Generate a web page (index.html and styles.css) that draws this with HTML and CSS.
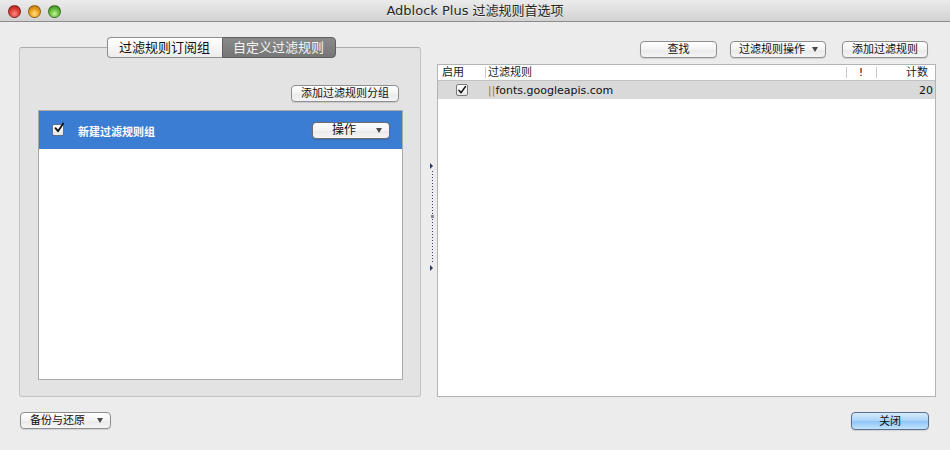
FILE: index.html
```html
<!DOCTYPE html>
<html lang="zh-CN">
<head>
<meta charset="utf-8">
<title>Adblock Plus 过滤规则首选项</title>
<link rel="stylesheet" href="styles.css">
</head>
<body>
<div class="window">
  <div class="titlebar">
    <div class="lights">
      <span class="light red"></span>
      <span class="light yellow"></span>
      <span class="light green"></span>
    </div>
    <div class="title">Adblock Plus 过滤规则首选项</div>
  </div>

  <div class="main">
    <div class="left">
      <div class="tabbox">
        <div class="tabs">
          <div class="tab">过滤规则订阅组</div>
          <div class="tab active">自定义过滤规则</div>
        </div>
        <div class="group-actions">
          <button class="btn add-group">添加过滤规则分组</button>
        </div>
        <div class="group-list">
          <div class="group-row">
            <span class="check on"><svg viewBox="0 0 12 12" width="12" height="12"><path d="M2.5 6.2 L5 9.2 L10.2 1.5" fill="none" stroke="#111" stroke-width="1.8" stroke-linecap="round" stroke-linejoin="round"/></svg></span>
            <span class="group-name">新建过滤规则组</span>
            <button class="btn popup ops">操作<span class="arrow"></span></button>
          </div>
        </div>
      </div>
    </div>

    <div class="splitter">
      <svg width="16" height="375" viewBox="0 0 16 375">
        <polygon points="9,141 12,144 9,147" fill="#2c3570"/>
        <line x1="11.5" y1="149" x2="11.5" y2="241" stroke="#3b3f73" stroke-width="1" stroke-dasharray="1 2"/>
        <rect x="10" y="193" width="3" height="3" fill="#8a8a9a"/>
        <polygon points="9,243 12,246 9,249" fill="#2c3570"/>
      </svg>
    </div>

    <div class="right">
      <div class="toolbar">
        <button class="btn find">查找</button>
        <button class="btn popup rule-ops">过滤规则操作<span class="arrow"></span></button>
        <button class="btn add-rule">添加过滤规则</button>
      </div>
      <div class="table">
        <div class="thead">
          <div class="c-en">启用</div>
          <div class="c-rule">过滤规则</div>
          <div class="c-ex">!</div>
          <div class="c-cnt">计数</div>
        </div>
        <div class="trow">
          <div class="c-en"><span class="check small"><svg viewBox="0 0 12 12" width="10" height="10"><path d="M2.2 6.3 L4.8 9.3 L10.2 1.8" fill="none" stroke="#111" stroke-width="1.6" stroke-linecap="round" stroke-linejoin="round"/></svg></span></div>
          <div class="c-rule"><span class="sep">||</span>fonts.googleapis.com</div>
          <div class="c-ex"></div>
          <div class="c-cnt">20</div>
        </div>
      </div>
    </div>
  </div>

  <div class="bottom">
    <button class="btn popup backup">备份与还原<span class="arrow"></span></button>
    <button class="btn default close">关闭</button>
  </div>
</div>
</body>
</html>
```

FILE: styles.css
```css
* { box-sizing: border-box; }
html, body { margin: 0; padding: 0; }
body {
  width: 950px;
  height: 450px;
  background: #ececec;
  font-family: "DejaVu Sans", "Noto Sans CJK SC", sans-serif;
  color: #111;
  overflow: hidden;
}
.window { width: 950px; height: 450px; display: flex; flex-direction: column; }

.titlebar {
  height: 22px;
  flex: none;
  display: flex;
  align-items: center;
  position: relative;
  background: linear-gradient(#ebebeb, #d2d2d2);
  border-bottom: 1px solid #8c8c8c;
}
.lights { display: flex; gap: 7px; padding-left: 8px; padding-top: 1px; }
.light {
  width: 13px; height: 13px; border-radius: 50%;
  border: 1px solid rgba(0,0,0,.35);
}
.red { background: radial-gradient(circle at 50% 70%, #ff8a80 0%, #e0443a 45%, #a21b15 100%); }
.yellow { background: radial-gradient(circle at 50% 70%, #ffe08a 0%, #f0a420 45%, #b06a0a 100%); }
.green { background: radial-gradient(circle at 50% 70%, #c6f29a 0%, #6cc040 45%, #2f7d1a 100%); }
.title {
  position: absolute; left: 0; right: 0; top: 0; height: 21px;
  line-height: 21px; text-align: center;
  font-size: 13px; color: #262626;
  text-shadow: 0 1px 0 rgba(255,255,255,.6);
}

.main { display: flex; height: 375px; flex: none; padding-left: 19px; }
.left { width: 402px; flex: none; padding-top: 25px; }
.tabbox {
  height: 350px;
  background: #e3e3e3;
  border: 1px solid #c3c3c3;
  border-top-color: #acacac;
  border-radius: 3px;
  display: flex;
  flex-direction: column;
}
.tabs {
  display: flex;
  justify-content: center;
  margin-top: -11px;
  margin-left: 2px;
  height: 21px;
  flex: none;
}
.tab {
  height: 21px;
  line-height: 19px;
  font-size: 13px;
  padding: 0 10px;
  border: 1px solid #8e8e8e;
  background: linear-gradient(#ffffff, #ececec);
  color: #111;
  width: 115px;
  text-align: center;
}
.tab:first-child { border-radius: 4px 0 0 4px; border-right: none; }
.tab.active {
  width: 114px;
  border-radius: 0 4px 4px 0;
  background: linear-gradient(#8a8a8a, #767676);
  border-color: #5e5e5e;
  color: #f4f4f4;
}
.group-actions { display: flex; justify-content: flex-end; padding: 27px 21px 0 0; flex: none; }
.group-list {
  margin: 8px 17px 16px 18px;
  flex: 1;
  background: #fff;
  border: 1px solid #a9a9a9;
}
.group-row {
  height: 38px;
  background: #3b7dd2;
  display: flex;
  align-items: center;
  padding-left: 13px;
  padding-right: 12px;
}
.group-name { color: #fff; font-weight: bold; font-size: 11px; margin-left: 14px; flex: 1; padding-top: 1px; }

.check {
  width: 12px; height: 12px;
  background: linear-gradient(#fff, #e6e6e6);
  border: 1px solid #5f6f86;
  border-radius: 2px;
  display: inline-flex; align-items: center; justify-content: center;
  position: relative;
}
.check svg { position: absolute; left: 0; top: -3px; }
.check.small { width: 12px; height: 12px; border-color: #7a7a7a; }
.check.small svg { left: 0; top: 0; }

.btn {
  font-family: inherit;
  font-size: 11px;
  height: 17px;
  padding: 0 8px;
  line-height: 15px;
  border: 1px solid #8f8f8f;
  border-radius: 4px;
  background: linear-gradient(#ffffff, #f3f3f3 50%, #e9e9e9 51%, #f5f5f5);
  box-shadow: 0 1px 1px rgba(0,0,0,.12);
  color: #111;
  display: inline-flex;
  align-items: center;
  justify-content: center;
  margin: 0;
}
.add-group { width: 108px; }
.popup { justify-content: flex-start; position: relative; }
.arrow {
  width: 0; height: 0;
  border-left: 3.5px solid transparent;
  border-right: 3.5px solid transparent;
  border-top: 5px solid #4a4a4a;
  position: absolute; right: 7px; top: 5px;
}
.ops { width: 78px; font-size: 12px; padding-left: 19px; border-color: #6d6d6d; }

.splitter { width: 16px; flex: none; }
.splitter svg { display: block; }

.right { width: 499px; flex: none; display: flex; flex-direction: column; }
.toolbar { height: 42px; display: flex; align-items: flex-start; padding-top: 19px; padding-left: 203px; }
.find { width: 77px; }
.rule-ops { width: 96px; margin-left: 13px; padding-left: 8px; }
.add-rule { width: 86px; margin-left: 16px; }

.table {
  height: 333px;
  background: #fff;
  border: 1px solid #b3b3b3;
}
.thead, .trow { display: flex; font-size: 11px; }
.thead { height: 16px; line-height: 15px; border-bottom: 1px solid #c2c2c2; color: #1a1a1a; }
.thead > div { position: relative; }
.thead .c-rule::before, .thead .c-ex::before, .thead .c-cnt::before {
  content: ""; position: absolute; left: 0; top: 2px; height: 11px; width: 1px; background: #c8c8c8;
}
.c-en { width: 47px; padding-left: 4px; }
.c-rule { width: 361px; padding-left: 3px; }
.c-ex { width: 30px; text-align: center; }
.c-cnt { flex: 1; text-align: right; padding-right: 7px; }
.trow { height: 18px; background: #d9d9d9; align-items: center; font-size: 11px; }
.trow .c-en { padding-left: 18px; display: flex; align-items: center; }
.trow .c-rule { padding-left: 3px; }
.trow .c-cnt { padding-right: 2px; }
.sep { color: #b8740e; }

.bottom {
  flex: 1;
  display: flex;
  justify-content: space-between;
  align-items: flex-start;
  padding: 15px 21px 0 20px;
}
.backup { width: 91px; padding-left: 9px; }
.close {
  width: 78px; height: 18px;
  border-color: #5a6f94;
  background: linear-gradient(#d7ebfc, #a9d3f8 50%, #8cc4f6 51%, #c3e3fc);
}
```
